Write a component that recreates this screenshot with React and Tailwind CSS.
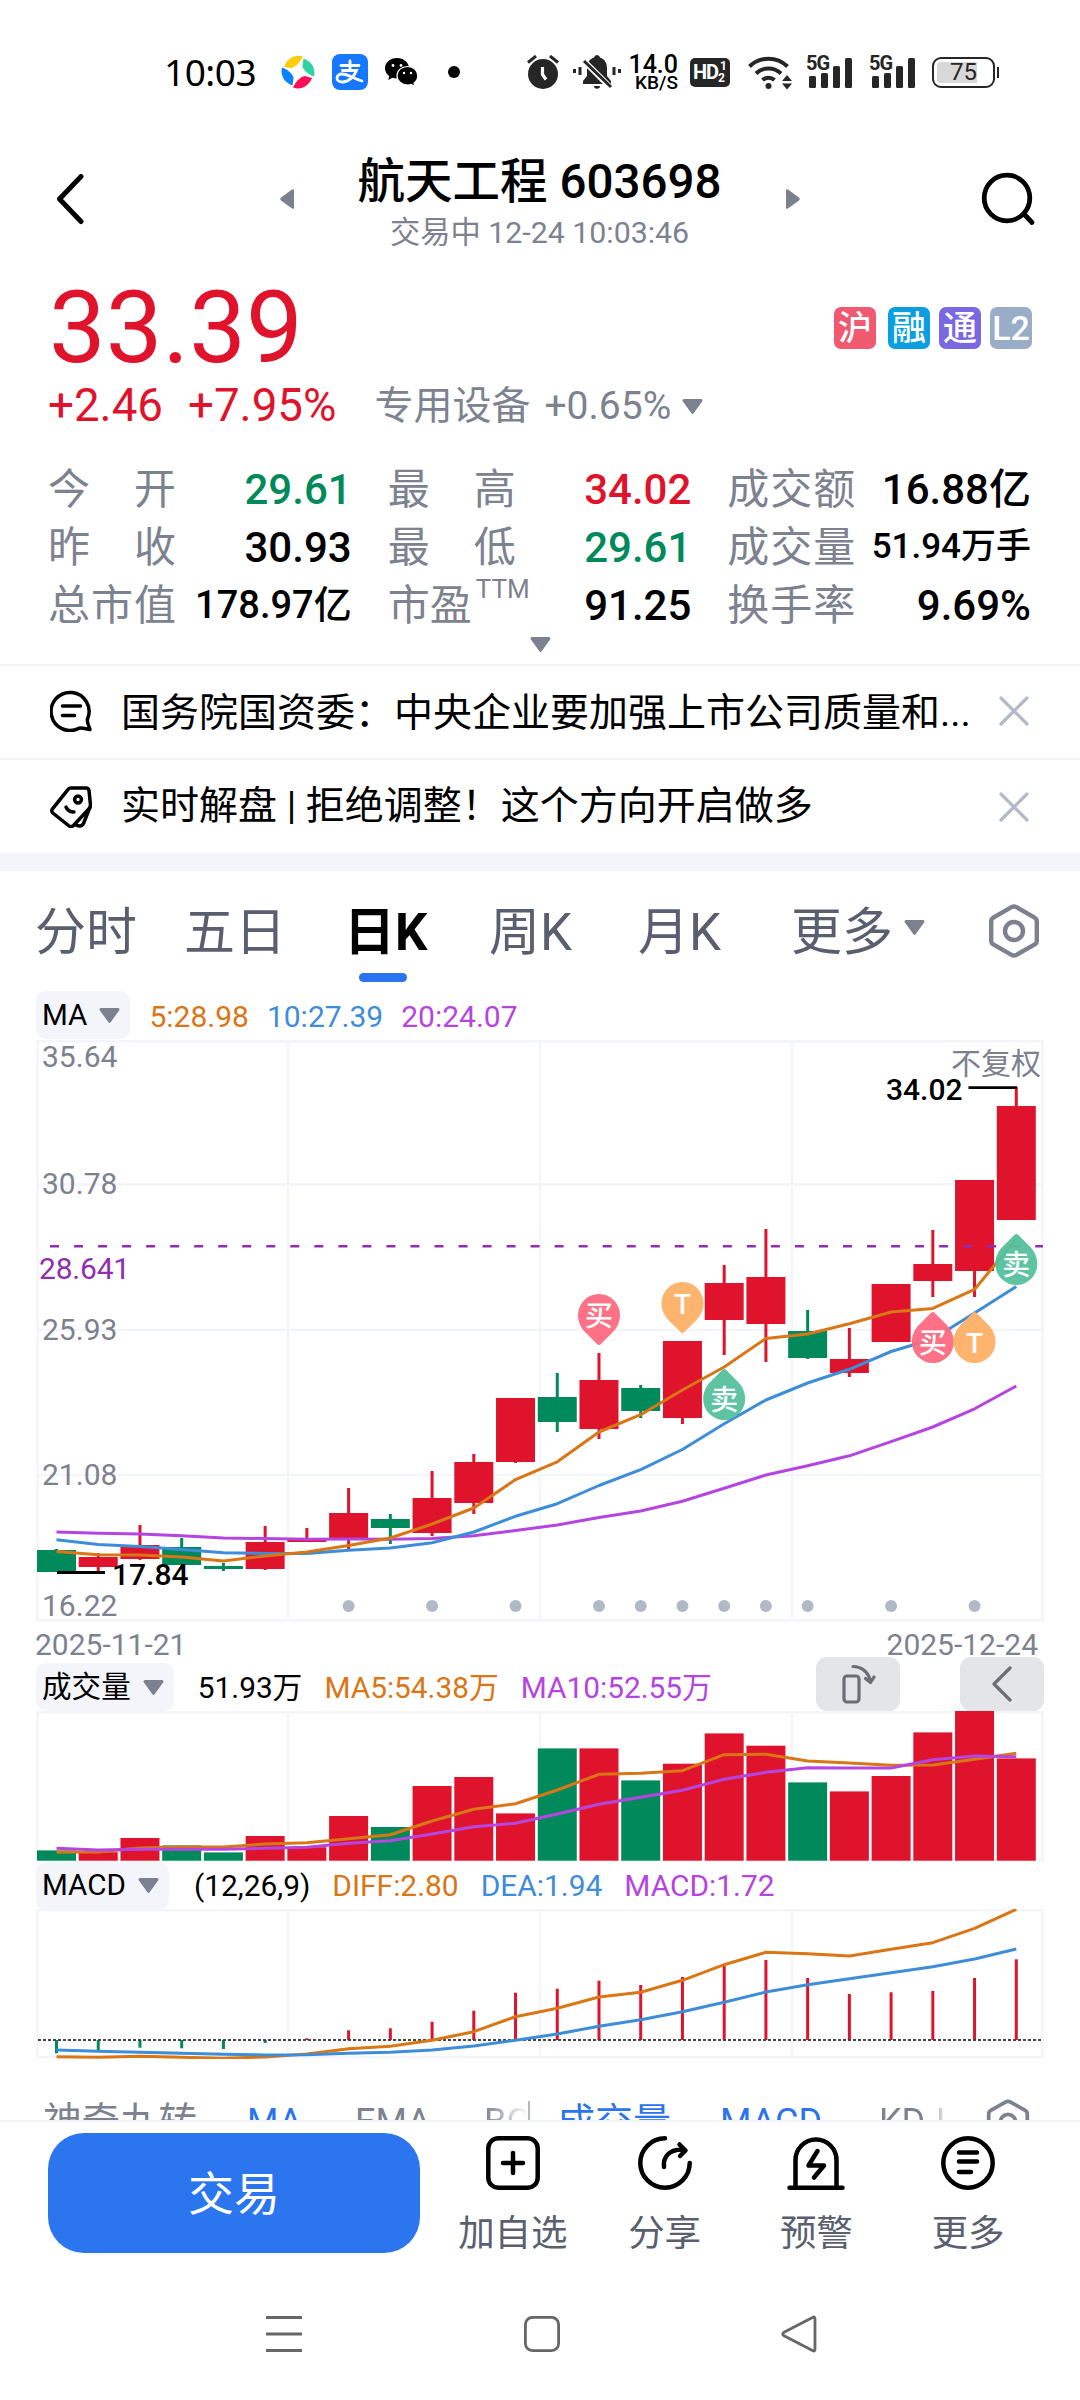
const UP = "#e0132c";
const DOWN = "#008a5c";
const ORANGE = "#d97615";
const BLUE = "#3d8dd8";
const PURPLE = "#b545e0";
const GRID = "#f4f5fa";

const FIRST_X = 56.5;
const STEP = 41.73;
const cx = (i) => FIRST_X + i * STEP;

// [up, high, top, bottom, low]
const candles = [
  [0, 509, 510, 532, 532],
  [1, 513, 517, 527, 532],
  [1, 485, 505, 519, 520],
  [0, 498, 507, 525, 525],
  [0, 523, 526, 529, 531],
  [1, 486, 502, 529, 530],
  [1, 488, 500, 502, 502],
  [1, 448, 473, 499, 509],
  [0, 474, 479, 488, 504],
  [1, 431, 458, 493, 496],
  [1, 414, 422, 463, 474],
  [1, 358, 358, 422, 423],
  [0, 333, 357, 382, 392],
  [1, 313, 340, 389, 399],
  [0, 345, 348, 371, 378],
  [1, 301, 301, 378, 384],
  [1, 225, 243, 280, 315],
  [1, 189, 237, 284, 322],
  [0, 270, 291, 318, 319],
  [1, 288, 319, 333, 337],
  [1, 244, 244, 302, 302],
  [1, 190, 224, 241, 257],
  [1, 140, 140, 231, 257],
  [1, 47, 66, 180, 180],
];

const ma5 = [511.5, 514.7, 515, 517, 521, 516, 512, 505.6, 498, 484, 468, 439.6, 421.8, 392, 374.7, 350, 327, 298.4, 294, 283.8, 272, 268.4, 249.4, 198.8];
const ma10 = [499.7, 504.4, 506.4, 509.6, 512.7, 513.5, 513.5, 510.3, 508, 502.8, 492, 476.3, 463.7, 445.5, 429.7, 409.5, 383.8, 360, 343, 329.3, 311.5, 299, 273, 246.6];
const ma20 = [492, 493.3, 494, 495.7, 498, 498.5, 499.3, 499, 499.3, 498.5, 495.7, 490.6, 485, 477.5, 471, 461.3, 448.3, 435, 425.7, 415.8, 401.6, 387, 368.8, 346];

const volumes = [10.3, 8.5, 22.7, 15.3, 8.3, 24.7, 13.5, 44.7, 33.7, 74.7, 83.7, 47.3, 112.3, 112.3, 80.3, 97, 127.3, 115, 78.3, 69.3, 84.7, 128.3, 149.7, 102.3];
const volMa5 = [141.3, 141, 137, 136, 136, 133, 131.7, 127.7, 123.7, 110, 98.3, 92.7, 79, 63.3, 62.3, 59.7, 43.7, 43.3, 50, 52, 54.3, 54, 48.3, 42.3];
const volMa10 = [137.3, 139, 138.3, 138.3, 138.3, 137.3, 136.3, 132.3, 129.7, 123, 115.7, 112.3, 103, 93.3, 86.3, 79.3, 68.3, 61.3, 56.7, 57, 57, 48.7, 45, 45.7];

const macd = [-13.3, -10.3, -7.7, -8.3, -9, -3, 1.7, 9.7, 11.7, 18.3, 29.3, 47.3, 51.3, 59.3, 55, 63, 74, 80, 62, 46, 47.7, 49, 62, 80.7];
const diff = [147.7, 148.3, 147.3, 148.3, 149.3, 148, 145, 139.7, 137.3, 131.3, 122.7, 107.7, 99.3, 88, 83.3, 71.3, 55.7, 43.3, 44.7, 47, 40.3, 33.7, 19.3, 0.3];
const dea = [141, 142.3, 143.3, 144.3, 145.3, 146, 145.7, 144.3, 143.3, 141, 137, 131.3, 125, 117.3, 110.7, 102.7, 93.3, 83, 75.7, 69.7, 63.7, 57.7, 50, 40];

const eventDots = [7, 9, 11, 13, 14, 15, 16, 17, 18, 20, 22];

const axis = [
  { label: "35.64", y: 26.5 },
  { label: "30.78", y: 153.5 },
  { label: "25.93", y: 299.5 },
  { label: "21.08", y: 444.5 },
  { label: "16.22", y: 575.5 },
];

const pins = [
  { i: 13, y: 275, text: "买", color: "#fd6a7f", down: true },
  { i: 15, y: 263, text: "T", color: "#ffb066", down: true },
  { i: 16, y: 359, text: "卖", color: "#54c09c" },
  { i: 21, y: 302, text: "买", color: "#fd6a7f" },
  { i: 22, y: 302, text: "T", color: "#ffb066" },
  { i: 23, y: 224, text: "卖", color: "#54c09c" },
];

const stats = [
  { label: ["今", "开"], value: "29.61", tone: "text-[#008a5c]" },
  { label: ["最", "高"], value: "34.02", tone: "text-[#e0132c]" },
  { label: ["成", "交", "额"], value: "16.88亿" },
  { label: ["昨", "收"], value: "30.93" },
  { label: ["最", "低"], value: "29.61", tone: "text-[#008a5c]" },
  { label: ["成", "交", "量"], value: "51.94万手", size: "text-[35px]" },
  { label: ["总", "市", "值"], value: "178.97亿", size: "text-[38px]" },
  { label: ["市", "盈"], sup: "TTM", value: "91.25" },
  { label: ["换", "手", "率"], value: "9.69%" },
];

function Line({ data, color }) {
  return (
    <polyline
      points={data.map((y, i) => `${cx(i).toFixed(1)},${y}`).join(" ")}
      fill="none"
      stroke={color}
      strokeWidth="3"
      strokeLinejoin="round"
    />
  );
}

function Caret({ className = "" }) {
  return (
    <svg viewBox="0 0 21 15" className={`h-[15px] w-[21px] shrink-0 ${className}`}>
      <path d="M2 0h17a1.5 1.5 0 0 1 1.3 2.2L11.8 14a1.6 1.6 0 0 1-2.6 0L.7 2.2A1.5 1.5 0 0 1 2 0z" fill="#7c818f" />
    </svg>
  );
}

function Hexagon({ className }) {
  return (
    <svg viewBox="0 0 52 54" fill="none" stroke="#7c818f" strokeWidth="4.4" strokeLinejoin="round" className={className}>
      <path d="M23.5 3.2q2.5-1.4 5 0L46.3 13.3q2.5 1.4 2.5 4.3v18.8q0 2.9-2.5 4.3L28.5 50.8q-2.5 1.4-5 0L5.7 40.700q-2.500-1.400-2.500-4.300V17.600q0-2.900 2.500-4.300z" />
      <circle cx="26" cy="27" r="9" />
    </svg>
  );
}

function Signal() {
  return (
    <div className="relative h-[34px] w-[47px]">
      <svg viewBox="0 0 47 34" className="size-full" fill="#262626">
        <rect x="3" y="21" width="7" height="12" rx="1.5" />
        <rect x="15" y="18" width="7" height="15" rx="1.5" />
        <rect x="27" y="11" width="7" height="22" rx="1.5" />
        <rect x="39" y="3" width="7" height="30" rx="1.5" />
      </svg>
      <span className="absolute top-[-1px] left-0 bg-white font-['Roboto'] text-[20px] leading-[18px] font-bold tracking-[-1px] text-[#262626]">
        5G
      </span>
    </div>
  );
}

function StatusBar() {
  return (
    <div className="flex h-[144px] items-center pl-[164px]">
      <span className="w-[117px] font-['Noto_Sans'] text-[37px] tracking-[-0.5px]">10:03</span>
      <svg viewBox="0 0 34 34" className="size-[34px]">
        <path d="M3 12C6 3 14-1 22 1.5 20 6 15 12 10 13z" fill="#ffcc0a" />
        <path d="M22.5 3.5C30 6 35 13 33 21.5 28 20 23 16 21.5 11.5z" fill="#2ed3a4" />
        <path d="M31 23C28 31 20 35.5 12 32.500 14 28 18 22 24 21z" fill="#fb0f58" />
        <path d="M11.5 30.5C4 28 -1 21 1 12.5 6 14 11 18 12.500 22.500z" fill="#0a82ff" />
      </svg>
      <div className="ml-[17px] flex size-[36px] items-center justify-center rounded-[8px] bg-[#1677ff] text-white">
        <svg viewBox="0 0 36 36" className="size-[36px]" fill="none" stroke="#fff" strokeWidth="2.8" strokeLinecap="round">
          <path d="M9 11.5h18M18 7v9M10.5 16.5h14C22 23 16.5 28 10.5 28c-3.5 0-5.5-1.8-5.5-4s2-4 5-4c6 0 12 5 20 7" />
        </svg>
      </div>
      <svg viewBox="0 0 33 29" className="ml-[17px] h-[29px] w-[33px]">
        <path d="M12 0C5.3 0 0 4.5 0 10.3c0 3.2 1.7 6 4.3 7.9L3.2 22l4.2-2.3c1.5.5 3 .7 4.6.7C18.7 20.4 24 16 24 10.3S18.7 0 12 0z" />
        <path d="M22.5 8.5c-6 0-10.5 4-10.5 9.2S16.5 27 22.5 27c1.3 0 2.6-.2 3.8-.6L29.9 28.5l-.9-3.4c2.3-1.7 3.8-4.3 3.8-7.3 0-5.3-4.5-9.3-10.3-9.3z" stroke="#fff" strokeWidth="1.2" />
        <circle cx="8" cy="7.5" r="1.4" fill="#fff" />
        <circle cx="16" cy="7.5" r="1.4" fill="#fff" />
        <circle cx="19" cy="15" r="1.2" fill="#fff" />
        <circle cx="26" cy="15" r="1.2" fill="#fff" />
      </svg>
      <span className="ml-[30px] size-[12px] rounded-full bg-black" />

      <svg viewBox="0 0 32 34" className="ml-[67px] h-[34px] w-[32px]" fill="none" stroke="#262626">
        <circle cx="16" cy="19" r="15" fill="#262626" stroke="none" />
        <path d="M1 7.5l8-6.5M31 7.5l-8-6.5" strokeWidth="3" />
        <path d="M15.5 12v7.5l3.5 5" stroke="#fff" strokeWidth="3.2" />
      </svg>
      <svg viewBox="0 0 48 34" className="ml-[14px] h-[34px] w-[48px]">
        <path d="M24 0a3 3 0 0 1 3 2.500C32 4 34 8.500 34 13v8l4 5v3H10v-3l4-5v-8c0-4.500 2-9 7-10.500A3 3 0 0 1 24 0zM21 31h6a3 2.800 0 0 1-6 0z" fill="#262626" />
        <path d="M8.5 3.5L37 32" stroke="#fff" strokeWidth="6" />
        <path d="M11 6l27 26" stroke="#262626" strokeWidth="3" />
        <path d="M1.5 14v4M7 12v8M41 12v8M46.5 14v4" stroke="#262626" strokeWidth="3" />
      </svg>
      <div className="ml-[9px] flex w-[48px] flex-col items-end pt-[2px] font-medium">
        <span className="text-[25px] leading-[19px]">14.0</span>
        <span className="text-[19px] leading-[17px]">KB/S</span>
      </div>
      <div className="ml-[12px] flex h-[29px] w-[40px] items-center justify-center rounded-[5px] bg-[#262626] text-white">
        <span className="text-[20px] leading-none font-bold tracking-[-1px]">HD</span>
        <span className="flex flex-col text-[12px] leading-[12px] font-bold">
          <span className="pl-[2px]">1</span>
          <span>2</span>
        </span>
      </div>
      <svg viewBox="0 0 46 35" className="ml-[18px] h-[35px] w-[46px]" fill="none" stroke="#262626">
        <path d="M1.5 11.500a27 27 0 0 1 38 0M8 18.500a18 18 0 0 1 25 0M14.500 25a9 9 0 0 1 12 0" strokeWidth="4" />
        <circle cx="20.5" cy="31" r="3" fill="#262626" stroke="none" />
        <path d="M34 26l5-6 5 6zM34 28.5l5 6 5-6z" fill="#262626" stroke="none" />
      </svg>
      <div className="ml-[12px] flex gap-[16px]">
        <Signal />
        <Signal />
      </div>
      <div className="ml-[16px] flex items-center gap-[2px]">
        <div className="relative flex h-[31px] w-[63px] items-center justify-center rounded-[9px] border-2 border-[#262626]">
          <span className="absolute inset-y-[3px] left-[3px] w-[40px] rounded-l-[4px] bg-[#d8d8d8]" />
          <span className="relative text-[24px] leading-none text-[#262626]">75</span>
        </div>
        <span className="h-[11px] w-[2px] bg-[#262626]" />
      </div>
    </div>
  );
}

function Header() {
  return (
    <header className="flex h-[112px] items-center justify-between pr-[43px] pl-[54px]">
      <svg viewBox="0 0 32 52" className="h-[52px] w-[32px]" fill="none" stroke="#000" strokeWidth="5" strokeLinecap="round" strokeLinejoin="round">
        <path d="M27 2.5L5.5 25 27 47.500" />
      </svg>
      <div className="ml-[12px] flex items-center gap-[65px]">
        <svg viewBox="0 0 14 20" className="mb-[2px] h-[20px] w-[14px]">
          <path d="M14 1.5v17q0 2-2 1L1 11.5q-1.5-1.5 0-3L12 .5q2-1 2 1z" fill="#7c818f" />
        </svg>
        <div className="flex w-[362px] flex-col items-center pt-[6px] whitespace-nowrap">
          <h1 className="text-[47.5px] leading-[60px] font-medium">航天工程 603698</h1>
          <p className="text-[30.3px] leading-[42px] text-[#7c8290]">交易中 12-24 10:03:46</p>
        </div>
        <svg viewBox="0 0 14 20" className="mb-[2px] h-[20px] w-[14px]">
          <path d="M0 1.5v17q0 2 2 1l11-8q1.5-1.5 0-3L2 .5Q0-.5 0 1.500z" fill="#7c818f" />
        </svg>
      </div>
      <svg viewBox="0 0 56 54" className="mb-[2px] h-[54px] w-[56px]" fill="none" stroke="#000" strokeWidth="4.8" strokeLinecap="round">
        <circle cx="26" cy="26" r="22.8" />
        <path d="M43 42l8 8.500" />
      </svg>
    </header>
  );
}

function Quote() {
  return (
    <section className="h-[408px] px-[49px] pt-[22px]">
      <div className="flex h-[100px] items-center justify-between">
        <span className="text-[101px] leading-[100px] text-[#e0132c]">33.39</span>
        <div className="mr-[-1px] flex gap-[9px] text-[34px] font-medium text-white">
          <span className="mr-[3px] flex size-[42px] items-center justify-center rounded-[7px] bg-[#f0596f]">沪</span>
          <span className="flex size-[42px] items-center justify-center rounded-[7px] bg-[#0c9fdf]">融</span>
          <span className="flex size-[42px] items-center justify-center rounded-[7px] bg-[#7a68e2]">通</span>
          <span className="flex size-[42px] items-center justify-center rounded-[7px] bg-[#99adc6]">L2</span>
        </div>
      </div>
      <div className="flex h-[54px] items-center pt-[3px] whitespace-nowrap">
        <span className="ml-[-1px] text-[45.7px] text-[#e0132c]">+2.46</span>
        <span className="ml-[25px] text-[45.7px] text-[#e0132c]">+7.95%</span>
        <span className="ml-[38px] text-[39px] text-[#7c8290]">专用设备</span>
        <span className="ml-[14px] text-[39px] text-[#7c8290]">+0.65%</span>
        <Caret className="ml-[11px]" />
      </div>
      <div className="mt-[28px] grid grid-cols-3 gap-x-[37px]">
        {stats.map((s, i) => (
          <div key={i} className="flex h-[58px] items-center justify-between text-[42px] whitespace-nowrap">
            <div className={`ml-[-1px] flex text-[#7c8290] ${s.sup ? "" : "w-[128px] justify-between"}`}>
              {s.label.map((c) => (
                <span key={c}>{c}</span>
              ))}
              {s.sup && <span className="ml-[4px] text-[26px] leading-[30px]">{s.sup}</span>}
            </div>
            <span className={`font-medium ${s.tone || "text-black"} ${s.size || ""}`}>{s.value}</span>
          </div>
        ))}
      </div>
      <div className="flex justify-center pt-[3px]">
        <Caret />
      </div>
    </section>
  );
}

function CloseIcon() {
  return (
    <svg viewBox="0 0 30 30" className="size-[30px]" stroke="#b2b9c7" strokeWidth="3.2" strokeLinecap="round">
      <path d="M2 2l26 26M28 2L2 28" />
    </svg>
  );
}

function News() {
  return (
    <section className="text-[39px]">
      <div className="flex h-[94px] items-center border-t-2 border-[#f3f4f7] pr-[51px] pb-[2px] pl-[50px]">
        <svg viewBox="0 0 42 42" className="size-[42px]" fill="none" stroke="#000" strokeWidth="3.5" strokeLinecap="round" strokeLinejoin="round">
          <path d="M37.5 29A19 19 0 1 0 29 38.2c3-.8 7 .8 11 1.3-.8-3-3.5-7-2.500-10.500z" />
          <path d="M12.5 16h18M12.5 25.5h12" />
        </svg>
        <p className="ml-[29px] w-[860px] pt-[4px] whitespace-nowrap">国务院国资委：中央企业要加强上市公司质量和...</p>
        <div className="ml-auto">
          <CloseIcon />
        </div>
      </div>
      <div className="flex h-[95px] items-center border-t-2 border-[#f3f4f7] pr-[51px] pl-[50px]">
        <svg viewBox="0 0 42 42" className="size-[42px]" fill="none" stroke="#000" strokeWidth="3.5" strokeLinecap="round" strokeLinejoin="round">
          <path d="M20.5 2h15.5q2.5 0 3 2.5L40.5 19q.2 1.8-1 3.2L23.5 39.5q-2.5 2-5 0L2.8 27q-1.8-2-.3-4.2L18.3 3.2Q19.3 2 20.5 2z" />
          <path d="M40 21l-6.5 16.5q-2 4-7.5 1.5" />
          <circle cx="28" cy="13.5" r="3.4" />
          <path d="M16 21q2 5 8 5" />
        </svg>
        <p className="ml-[29px] pb-[1px]">实时解盘 | 拒绝调整！这个方向开启做多</p>
        <div className="ml-auto">
          <CloseIcon />
        </div>
      </div>
      <div className="h-[18px] bg-[#f4f5fa]" />
    </section>
  );
}

function Tabs() {
  return (
    <nav className="flex h-[120px] items-center pt-[4px] pl-[35px] text-[51px] whitespace-nowrap text-[#5a5f70]">
      <span className="w-[149px]">分时</span>
      <span className="w-[160px]">五日</span>
      <span className="relative w-[145px] font-bold text-black">
        日K
        <i className="absolute top-[78px] left-[15px] h-[9px] w-[48px] rounded-full bg-[#2b74ef]" />
      </span>
      <span className="w-[149px]">周K</span>
      <span className="w-[153px]">月K</span>
      <span>更多</span>
      <Caret className="mb-[11px] ml-[11px]" />
      <Hexagon className="mb-[4px] ml-[63px] h-[54px] w-[52px]" />
    </nav>
  );
}

function IndicatorPill({ children }) {
  return (
    <div className="flex h-[48px] items-center gap-[12px] rounded-[10px] bg-[#f4f5fa] pr-[10px] pl-[6px] text-[29.6px]">
      <span>{children}</span>
      <Caret />
    </div>
  );
}

function Frame({ height, rows = [] }) {
  return (
    <g stroke={GRID} strokeWidth="2.5" fill="none">
      <rect x="37.5" y="1.25" width="1005" height={height} />
      <path d={`M288 1V${height}M540 1V${height}M792 1V${height}`} />
      {rows.map((y) => (
        <path key={y} d={`M37 ${y}H1043`} />
      ))}
    </g>
  );
}

function KChart() {
  return (
    <svg viewBox="0 0 1080 590" className="block h-[590px] w-[1080px]">
      <Frame height={579} rows={[144.5, 290, 435]} />
      <g fontSize="30" fill="#7c818f">
        {axis.map((a) => (
          <text key={a.label} x="42" y={a.y}>
            {a.label}
          </text>
        ))}
        <text x="1041" y="34" textAnchor="end">
          不复权
        </text>
      </g>
      {candles.map(([up, high, top, bottom, low], i) => (
        <g key={i} fill={up ? UP : DOWN}>
          <rect x={cx(i) - 1.5} y={high} width="3" height={low - high} />
          <rect x={cx(i) - 19.5} y={top} width="39" height={bottom - top} />
        </g>
      ))}
      <path d="M50 206.3H1043" stroke="#8f2fae" strokeWidth="2.6" strokeDasharray="9 15.03" />
      <text x="39" y="239" fontSize="30" fill="#8f2fae" letterSpacing="-0.2">
        28.641
      </text>
      <Line data={ma20} color={PURPLE} />
      <Line data={ma10} color={BLUE} />
      <Line data={ma5} color={ORANGE} />
      <g stroke="#000" strokeWidth="2.8">
        <path d="M57 532.5H105M968.5 47.7H1017" />
      </g>
      <g fontSize="30" fontWeight="500">
        <text x="112" y="544.5">17.84</text>
        <text x="886" y="59.5">34.02</text>
      </g>
      {eventDots.map((i) => (
        <circle key={i} cx={cx(i)} cy="566" r="6" fill="#b1b8c6" />
      ))}
      {pins.map((p) => (
        <g key={p.i} transform={`translate(${cx(p.i)} ${p.y})`}>
          <path
            d="M-2-29Q0-31 2-29L12.5-18.5C18-13.5 21-7 21 0A21 21 0 0 1-21 0C-21-7-18-13.5-12.5-18.5z"
            fill={p.color}
            fillOpacity="0.95"
            transform={p.down ? "rotate(180)" : undefined}
          />
          <text y="10.5" textAnchor="middle" fontSize="28" fontWeight="500" fill="#fff">
            {p.text}
          </text>
        </g>
      ))}
    </svg>
  );
}

function VolumeChart() {
  return (
    <svg viewBox="0 0 1080 151" className="block h-[151px] w-[1080px]">
      <Frame height={148} />
      {volumes.map((h, i) => (
        <rect key={i} x={cx(i) - 19.5} y={149.7 - h} width="39" height={h} fill={candles[i][0] ? UP : DOWN} />
      ))}
      <Line data={volMa5} color={ORANGE} />
      <Line data={volMa10} color={PURPLE} />
    </svg>
  );
}

function MacdChart() {
  return (
    <svg viewBox="0 0 1080 150" className="block h-[150px] w-[1080px]">
      <Frame height={147} />
      {macd.map((h, i) => (
        <rect key={i} x={cx(i) - 1.5} y={h > 0 ? 131 - h : 131} width="3" height={Math.abs(h)} fill={h > 0 ? UP : DOWN} />
      ))}
      <path d="M38 131H1043" stroke="#444" strokeWidth="2" strokeDasharray="3 2" />
      <Line data={diff} color={ORANGE} />
      <Line data={dea} color={BLUE} />
    </svg>
  );
}

function Charts() {
  return (
    <section className="text-[30px] whitespace-nowrap">
      <div className="flex h-[49px] items-start pl-[36px]">
        <IndicatorPill>MA</IndicatorPill>
        <div className="flex h-[48px] items-center gap-[18px] pt-[2px] pl-[19px]">
          <span className="text-[#d97615]">5:28.98</span>
          <span className="text-[#3d8dd8]">10:27.39</span>
          <span className="text-[#b545e0]">20:24.07</span>
        </div>
      </div>
      <KChart />
      <div className="flex h-[27px] items-center justify-between pt-[3px] pr-[42px] pl-[35px] text-[30px] leading-none text-[#7c8290]">
        <span>2025-11-21</span>
        <span>2025-12-24</span>
      </div>
      <div className="flex h-[54px] items-end pr-[36px] pl-[36px]">
        <IndicatorPill>成交量</IndicatorPill>
        <div className="flex h-[48px] items-center gap-[22px] pt-[2px] pl-[24px] text-[29.8px]">
          <span>51.93万</span>
          <span className="text-[#d97615]">MA5:54.38万</span>
          <span className="text-[#b545e0]">MA10:52.55万</span>
        </div>
        <div className="ml-auto flex gap-[60px]">
          <div className="flex h-[54px] w-[84px] items-center justify-center rounded-[11px] bg-[#e4e5e9]">
            <svg viewBox="0 0 36 40" className="h-[40px] w-[36px]" fill="none" stroke="#6b6e76" strokeWidth="3.2" strokeLinecap="round" strokeLinejoin="round">
              <rect x="4" y="12" width="15" height="26" rx="3" />
              <path d="M13 2.5c9 0 16 6 17.5 15.5M25.5 14.5l5 4 3.5-5.5" />
            </svg>
          </div>
          <div className="flex h-[54px] w-[84px] items-center justify-center rounded-[11px] bg-[#e4e5e9]">
            <svg viewBox="0 0 20 36" className="h-[36px] w-[20px]" fill="none" stroke="#6b6e76" strokeWidth="3.2" strokeLinecap="round" strokeLinejoin="round">
              <path d="M18 2L2 18l16 16" />
            </svg>
          </div>
        </div>
      </div>
      <VolumeChart />
      <div className="flex h-[47px] items-center pl-[36px]">
        <IndicatorPill>MACD</IndicatorPill>
        <div className="flex h-[48px] items-center gap-[22px] pt-[2px] pl-[25px] text-[29.9px]">
          <span>(12,26,9)</span>
          <span className="text-[#d97615]">DIFF:2.80</span>
          <span className="text-[#3d8dd8]">DEA:1.94</span>
          <span className="text-[#b545e0]">MACD:1.72</span>
        </div>
      </div>
      <MacdChart />
    </section>
  );
}

function IndicatorStrip() {
  return (
    <div className="h-[61px] overflow-hidden pt-[38px] pl-[43px]">
      <div className="flex h-[50px] items-center text-[36px] leading-[50px] whitespace-nowrap text-[#7c8290]">
        <span className="w-[204px] text-[38.5px]">神奇九转</span>
        <span className="w-[108px] text-[#2b74ef]">MA</span>
        <span className="w-[129px]">EMA</span>
        <span className="w-[44px] overflow-hidden bg-gradient-to-r from-[#7c8290] to-white bg-clip-text text-transparent">BOLL</span>
        <i className="h-[42px] w-[2px] bg-[#b3b9c6]" />
        <span className="ml-[27px] w-[163px] text-[38px] text-[#2b74ef]">成交量</span>
        <span className="w-[159px] text-[#2b74ef]">MACD</span>
        <span className="w-[72px] bg-gradient-to-r from-[#7c8290] from-60% to-white bg-clip-text text-transparent">KDJ</span>
        <Hexagon className="ml-[35px] h-[46px] w-[44px]" />
      </div>
    </div>
  );
}

const actions = [
  {
    label: "加自选",
    icon: (
      <>
        <rect x="4.3" y="2.3" width="49.4" height="49.4" rx="10" />
        <path d="M29 17v20M19 27h20" />
      </>
    ),
  },
  {
    label: "分享",
    icon: (
      <>
        <path d="M29 2.3A24.7 24.7 0 1 0 53.7 27" />
        <path d="M28 31c-1-9 4-17.5 18-17.5M43.5 8.5l6 6-5.5 5.5" />
      </>
    ),
  },
  {
    label: "预警",
    icon: (
      <>
        <path d="M2.5 51.7h53M8.5 51V24a20.5 20.5 0 0 1 41 0v27" />
        <path d="M30.5 15L21.5 29.5h15.5L27 41.5" />
      </>
    ),
  },
  {
    label: "更多",
    icon: (
      <>
        <circle cx="29" cy="27" r="24.7" />
        <path d="M20 16.5h18M20 25.5h18M20 36h12" />
      </>
    ),
  },
];

function BottomBar() {
  return (
    <div className="flex h-[150px] border-t-2 border-[#f3f4f7] pl-[48px]">
      <button type="button" className="mt-[11px] h-[120px] w-[372px] rounded-[36px] bg-[#2b76ef] pt-[3px] text-[46px] text-white">
        交易
      </button>
      <div className="ml-[17px] grid w-[607px] grid-cols-4">
        {actions.map((a) => (
          <div key={a.label} className="flex flex-col items-center pt-[14px]">
            <svg viewBox="0 0 58 54" className="h-[54px] w-[58px]" fill="none" stroke="#000" strokeWidth="4.5" strokeLinecap="round" strokeLinejoin="round">
              {a.icon}
            </svg>
            <span className="mt-[19px] text-[36.5px] leading-[50px] text-[#5a5f70]">{a.label}</span>
          </div>
        ))}
      </div>
    </div>
  );
}

function SystemNav() {
  return (
    <div className="flex h-[130px] justify-between pt-[45px] pr-[262px] pl-[265px]">
      <svg viewBox="0 0 38 38" className="size-[38px]" stroke="#666" strokeWidth="3">
        <path d="M1 2.5h36M1 19h36M1 35.5h36" />
      </svg>
      <svg viewBox="0 0 38 38" className="size-[38px]" fill="none" stroke="#666" strokeWidth="2.8">
        <rect x="2.4" y="2.4" width="33.2" height="33.2" rx="7" />
      </svg>
      <svg viewBox="0 0 38 38" className="size-[38px]" fill="none" stroke="#666" strokeWidth="2.8" strokeLinejoin="round">
        <path d="M35 4v30q0 3-2.5 1.5L4 20.8q-2.5-1.8 0-3.6L32.5 2.5Q35 1 35 4z" />
      </svg>
    </div>
  );
}

export default function App() {
  return (
    <div className="h-[2400px] w-[1080px] overflow-hidden bg-white font-['Roboto','Noto_Sans_CJK_SC',sans-serif] text-black">
      <StatusBar />
      <Header />
      <Quote />
      <News />
      <Tabs />
      <Charts />
      <IndicatorStrip />
      <BottomBar />
      <SystemNav />
    </div>
  );
}
